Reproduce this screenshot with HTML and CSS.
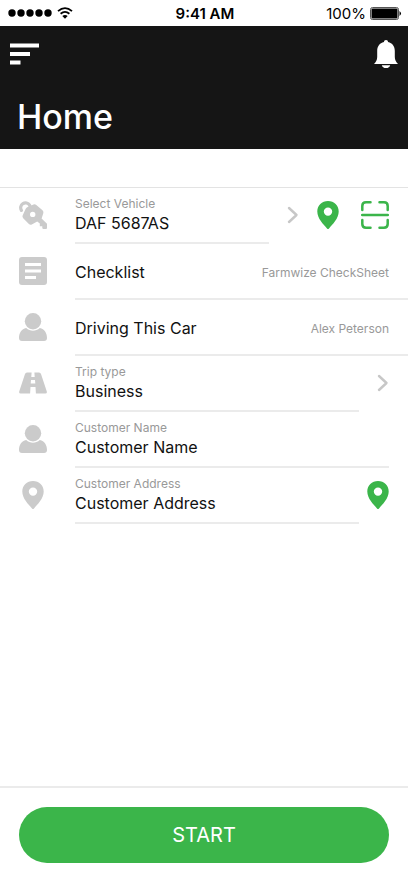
FILE: index.html
```html
<!DOCTYPE html>
<html lang="en">
<head>
<meta charset="utf-8">
<meta name="viewport" content="width=device-width, initial-scale=1">
<title>Home</title>
<link rel="stylesheet" href="styles.css">
</head>
<body>
<svg class="symbols" aria-hidden="true">
  <symbol id="pin" viewBox="0 0 22 28"><path fill-rule="evenodd" d="M11 0C4.900 0 .3 4.600 .3 10.500C.3 17.500 6.500 23.500 10 27.400Q11 28.500 12 27.400C15.500 23.500 21.700 17.500 21.700 10.500C21.700 4.600 17.100 0 11 0ZM11 6.400a4.200 4.200 0 1 1 0 8.400a4.200 4.200 0 0 1 0-8.400Z"/></symbol>
  <symbol id="person" viewBox="0 0 28 28"><circle cx="14" cy="8.200" r="8.200"/><path d="M7.200 15C11 18.600 17 18.600 20.800 15C25.500 16 28 20 28 25Q28 28 25 28H3Q0 28 0 25C0 20 2.500 16 7.200 15Z"/></symbol>
  <symbol id="chevron" viewBox="0 0 12 18"><path d="M2 2l7.500 7L2 16" fill="none" stroke="currentColor" stroke-width="2.400" stroke-linecap="round" stroke-linejoin="round"/></symbol>
</svg>
<div class="screen">
  <div class="status">
    <div class="status-left">
      <svg class="signal" viewBox="0 0 44 8"><circle cx="4" cy="4" r="3.700"/><circle cx="13" cy="4" r="3.700"/><circle cx="22" cy="4" r="3.700"/><circle cx="31" cy="4" r="3.700"/><circle cx="40" cy="4" r="3.700"/></svg>
      <svg class="wifi" viewBox="0 0 16 12"><path d="M1 4.200Q8-2 15 4.200M3.600 6.800Q8 3 12.400 6.800" fill="none" stroke="#000" stroke-width="1.800"/><path d="M5.300 9Q8 7 10.700 9L8 11.700Z"/></svg>
    </div>
    <span class="time">9:41 AM</span>
    <div class="status-right">
      <span>100%</span>
      <svg class="battery" viewBox="0 0 32 13"><rect x=".5" y=".5" width="28" height="12" rx="2" fill="none" stroke="#555"/><rect x="1.500" y="1.500" width="26" height="10" rx="1"/><path d="M29.500 4q3 2.500 0 5z"/></svg>
    </div>
  </div>

  <header class="header">
    <div class="toolbar">
      <button class="icon-button" type="button" aria-label="Menu"><svg class="menu" viewBox="0 0 29 22"><path d="M0 .5h29v4H0zM0 9h20v4H0zM0 17.500h10.500v4H0z"/></svg></button>
      <button class="icon-button" type="button" aria-label="Notifications"><svg class="bell" viewBox="0 0 24 28"><path d="M12 0C10.700 0 10 .8 10 2C5.500 3 3.200 6.500 3.200 11V17C3.200 20 2 21.800 0 24H24C22 21.800 20.800 20 20.800 17V11C20.800 6.500 18.500 3 14 2C14 .8 13.300 0 12 0ZM7.800 25.200H16.200Q15.500 28 12 28Q8.500 28 7.800 25.200Z"/></svg></button>
    </div>
    <h1>Home</h1>
  </header>

  <main class="form">
    <div class="row">
      <div class="lead"><svg class="icon" viewBox="0 0 28 28"><path d="M2.400 9.300A4.700 4.700 0 1 1 10.600 4.200L12 7" fill="none" stroke="currentColor" stroke-width="3.200" stroke-linecap="round"/><path fill-rule="evenodd" d="M14.500 3.500Q16 2.900 17.300 4L23.500 9.300Q24.900 10.600 24.300 12.300L22.600 17.500L28 22.700V27Q28 28 27 28H24.500Q23.500 28 23.300 27V25.200H20.800V22.500L18.200 20.500L12.800 23.500Q11.300 24.300 9.900 23.100L4.200 17.300Q3 16 3.700 14.300L6.700 7.800Q7.300 6.500 8.600 6ZM13.700 10.700a2.700 2.700 0 1 0 0 5.400a2.700 2.700 0 0 0 0-5.400Z"/></svg></div>
      <button class="field" type="button"><span class="label">Select Vehicle</span><span class="value">DAF 5687AS</span></button>
      <div class="actions three">
        <svg class="chevron"><use href="#chevron"/></svg>
        <button class="icon-button" type="button" aria-label="Locate vehicle"><svg class="pin"><use href="#pin"/></svg></button>
        <button class="icon-button" type="button" aria-label="Scan vehicle"><svg class="icon" viewBox="0 0 28 28"><path d="M1.300 9V5Q1.300 1.300 5 1.300H9.500M18.500 1.300H23Q26.700 1.300 26.700 5V9M26.700 19V23Q26.700 26.700 23 26.700H18.500M9.500 26.700H5Q1.300 26.700 1.300 23V19M1.200 14H26.800" fill="none" stroke="currentColor" stroke-width="2.500" stroke-linecap="round"/></svg></button>
      </div>
    </div>
    <div class="row">
      <div class="lead"><svg class="icon" viewBox="0 0 28 28"><path fill-rule="evenodd" d="M3 0H25Q28 0 28 3V25Q28 28 25 28H3Q0 28 0 25V3Q0 0 3 0ZM6 6V9H22V6ZM6 12.500V15.500H22V12.500ZM6 19V22H17V19Z"/></svg></div>
      <div class="field single"><span class="value">Checklist</span><span class="detail">Farmwize CheckSheet</span></div>
    </div>
    <div class="row">
      <div class="lead"><svg class="icon"><use href="#person"/></svg></div>
      <div class="field single"><span class="value">Driving This Car</span><span class="detail">Alex Peterson</span></div>
    </div>
    <div class="row">
      <div class="lead"><svg class="icon" viewBox="0 0 28 28"><path fill-rule="evenodd" d="M8 3.500H20Q21.500 3.500 22 5L27.800 22.500Q28.300 24.500 26.300 24.500H1.700Q-.3 24.500 .2 22.500L6 5Q6.500 3.500 8 3.500ZM12.600 3.500L12.300 8H15.700L15.400 3.500ZM12 11L11.700 14.500H16.300L16 11ZM11.500 18L11.100 24.500H16.900L16.500 18Z"/></svg></div>
      <button class="field" type="button"><span class="label">Trip type</span><span class="value">Business</span></button>
      <div class="actions"><svg class="chevron"><use href="#chevron"/></svg></div>
    </div>
    <div class="row inset">
      <div class="lead"><svg class="icon"><use href="#person"/></svg></div>
      <div class="field"><label class="label" for="name">Customer Name</label><input class="value" id="name" type="text" value="Customer Name"></div>
    </div>
    <div class="row">
      <div class="lead"><svg class="pin"><use href="#pin"/></svg></div>
      <div class="field"><label class="label" for="address">Customer Address</label><input class="value" id="address" type="text" value="Customer Address"></div>
      <div class="actions"><button class="icon-button" type="button" aria-label="Pick address on map"><svg class="pin"><use href="#pin"/></svg></button></div>
    </div>
  </main>

  <footer class="footer"><button class="start" type="button">START</button></footer>
</div>
</body>
</html>
```
FILE: styles.css
```css
* { box-sizing: border-box; }

body {
  margin: 0;
  background: #fff;
  color: #111;
  font-family: Inter, "Liberation Sans", sans-serif;
}

button, input {
  margin: 0;
  padding: 0;
  border: 0;
  background: none;
  color: inherit;
  font: inherit;
  text-align: left;
}

svg { display: block; flex: none; fill: currentColor; }

.symbols { position: absolute; width: 0; height: 0; }

.screen {
  display: flex;
  flex-direction: column;
  min-height: 100vh;
}

.status {
  display: grid;
  grid-template-columns: 1fr auto 1fr;
  align-items: center;
  height: 26px;
  padding: 0 6px 0 8px;
  color: #000;
  font-size: 15px;
}

.status-left, .status-right { display: flex; align-items: center; gap: 5px; }
.status-right { justify-content: flex-end; gap: 4px; }
.signal { width: 44px; height: 8px; }
.wifi { width: 16px; height: 12px; }
.battery { width: 32px; height: 13px; }
.time { font-weight: 600; }

.header {
  height: 123px;
  padding: 14px 10px 0;
  background: #151515;
  color: #fff;
}

.toolbar { display: flex; justify-content: space-between; align-items: center; height: 28px; }
.menu { width: 29px; height: 22px; }
.bell { width: 24px; height: 28px; }

h1 {
  margin: 28px 0 0 7px;
  font-size: 34px;
  font-weight: 500;
  line-height: 42px;
}

.form {
  flex: 1;
  margin-top: 38px;
  border-top: 1px solid #e3e3e3;
}

.row { display: flex; height: 56px; }
.inset { padding-right: 19px; }

.lead {
  display: flex;
  flex: none;
  justify-content: center;
  align-items: center;
  width: 66px;
  height: 54px;
  margin-right: 9px;
  color: #cbcbcb;
}

.icon { width: 28px; height: 28px; }
.pin { width: 22px; height: 28px; }
.chevron { width: 12px; height: 18px; color: #c7c7c7; }

.field {
  display: flex;
  flex: 1;
  flex-direction: column;
  min-width: 0;
  padding-top: 8px;
  border-bottom: 2px solid #ebebeb;
}

.single {
  flex-direction: row;
  justify-content: space-between;
  align-items: center;
  padding: 2px 19px 0 0;
}

.label { color: #999; font-size: 12px; line-height: 16px; }
.value { width: 100%; font-size: 16px; line-height: 22px; }
.single .value { width: auto; }
.detail { padding-top: 2px; color: #999; font-size: 12px; line-height: 16px; }

.actions {
  display: flex;
  flex: none;
  justify-content: flex-end;
  align-items: center;
  width: 49px;
  height: 54px;
  padding-right: 19px;
  color: #3bb54a;
}

.three {
  display: grid;
  grid-template-columns: 30px 44px 28px;
  width: 139px;
}

.footer { padding: 19px 19px 20px; border-top: 2px solid #ebebeb; }

.start {
  width: 100%;
  height: 56px;
  border-radius: 28px;
  background: #3bb54a;
  color: #fff;
  font-size: 20px;
  text-align: center;
}
```
